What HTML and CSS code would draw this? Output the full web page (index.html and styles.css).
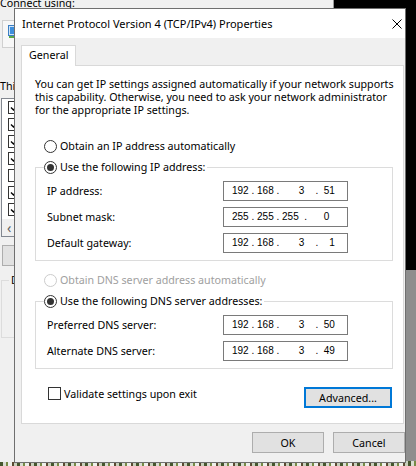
FILE: index.html
```html
<!DOCTYPE html>
<html lang="en">
<head>
    <meta charset="UTF-8">
    <meta name="viewport" content="width=device-width, initial-scale=1.0">
    <title>Internet Protocol Version 4 (TCP/IPv4) Properties</title>
    <link rel="stylesheet" href="styles.css">
</head>
<body>
    <div class="desktop">
        <div class="wallpaper"></div>

        <!-- adapter properties window, mostly covered by the dialog -->
        <section class="window back-window">
            <div class="back-text">Connect using:</div>
            <div class="adapter-box">
                <svg class="adapter-icon" width="12" height="14" viewBox="0 0 12 14">
                    <rect x="0.5" y="0.5" width="11" height="10" fill="#cfe3f7" stroke="#3b7fc4"/>
                    <rect x="2" y="2" width="8" height="7" fill="#3f8fdc"/>
                    <rect x="1" y="11" width="10" height="2" fill="#5aa84a"/>
                </svg>
            </div>
            <div class="back-text items-caption">This connection uses the following items:</div>
            <div class="item-list">
                <div class="item"><span class="mini-check checked"></span></div>
                <div class="item"><span class="mini-check checked"></span></div>
                <div class="item"><span class="mini-check checked"></span></div>
                <div class="item"><span class="mini-check checked"></span></div>
                <div class="item"><span class="mini-check"></span></div>
                <div class="item"><span class="mini-check checked"></span></div>
                <div class="item"><span class="mini-check checked"></span></div>
                <div class="hscroll"><span class="scroll-arrow">&lsaquo;</span></div>
            </div>
            <div class="back-button"></div>
            <fieldset class="back-group">
                <legend>Description</legend>
            </fieldset>
        </section>

        <section class="dialog">
            <header class="titlebar">
                <span class="title">Internet Protocol Version 4 (TCP/IPv4) Properties</span>
                <svg class="close" width="10" height="10" viewBox="0 0 10 10">
                    <path d="M0.5 0.5L9.5 9.5M9.5 0.5L0.5 9.5" stroke="#000" stroke-width="1"/>
                </svg>
            </header>

            <div class="dialog-body">
                <div class="tab">General</div>
                <div class="tab-panel">
                    <p class="intro">You can get IP settings assigned automatically if your network supports<br>this capability. Otherwise, you need to ask your network administrator<br>for the appropriate IP settings.</p>

                    <div class="option first-option"><span class="radio"></span>Obtain an IP address automatically</div>
                    <fieldset class="group">
                        <legend><span class="option-label"><span class="radio checked"></span>Use the following IP address:</span></legend>
                        <div class="field-row"><span>IP address:</span><span class="ip-box">192 . 168 .       3    .  51</span></div>
                        <div class="field-row"><span>Subnet mask:</span><span class="ip-box">255 . 255 . 255  .      0</span></div>
                        <div class="field-row"><span>Default gateway:</span><span class="ip-box">192 . 168 .       3    .    1</span></div>
                    </fieldset>

                    <div class="option disabled"><span class="radio"></span>Obtain DNS server address automatically</div>
                    <fieldset class="group">
                        <legend><span class="option-label"><span class="radio checked"></span>Use the following DNS server addresses:</span></legend>
                        <div class="field-row"><span>Preferred DNS server:</span><span class="ip-box">192 . 168 .       3    .  50</span></div>
                        <div class="field-row"><span>Alternate DNS server:</span><span class="ip-box">192 . 168 .       3    .  49</span></div>
                    </fieldset>

                    <div class="panel-footer">
                        <div class="check-option"><span class="checkbox"></span>Validate settings upon exit</div>
                        <button class="button advanced">Advanced...</button>
                    </div>
                </div>

                <div class="actions">
                    <button class="button">OK</button>
                    <button class="button">Cancel</button>
                </div>
            </div>
        </section>
    </div>
</body>
</html>
```

FILE: styles.css
```css
body {
    margin: 0;
    font-family: "Noto Sans", sans-serif;
    font-size: 10.7px;
    color: #000;
}
.desktop {
    position: relative;
    width: 416px;
    height: 466px;
    overflow: hidden;
    background: linear-gradient(#000 0 270px, #8e8e8e 270px);
}
.wallpaper {
    position: absolute;
    left: 0;
    right: 0;
    bottom: 0;
    height: 5px;
    background: repeating-linear-gradient(90deg, #46562e 0 3px, #d9ddd3 3px 6px, #788a46 6px 8px, #eef0ea 8px 12px, #5b4a32 12px 14px, #c8d0bc 14px 17px);
}

/* background window */
.back-window {
    position: absolute;
    left: -12px;
    top: -10px;
    width: 346px;
    height: 472px;
    box-sizing: border-box;
    padding: 7px 0 0 12px;
    background: #f0f0f0;
    border-right: 1px solid #9a9a9a;
}
.back-text {
    line-height: 13px;
    white-space: nowrap;
}
.adapter-box {
    margin: 10px 0 0 2px;
    height: 28px;
    width: 300px;
    box-sizing: border-box;
    border: 1px solid #d0d0d0;
    background: #f7f7f7;
    padding: 4px 0 0 5px;
}
.adapter-icon {
    display: block;
}
.items-caption {
    margin-top: 32px;
}
.item-list {
    margin: 5px 0 0 1px;
    width: 300px;
    height: 139px;
    box-sizing: border-box;
    border: 1px solid #828790;
    background: #fff;
    padding-left: 6px;
    display: flex;
    flex-direction: column;
}
.item {
    height: 17px;
    display: flex;
    align-items: center;
}
.mini-check {
    width: 13px;
    height: 13px;
    box-sizing: border-box;
    border: 1px solid #333;
    background: #fff;
    flex: none;
}
.mini-check.checked {
    background: #fff url("data:image/svg+xml,%3Csvg xmlns='http://www.w3.org/2000/svg' width='11' height='11'%3E%3Cpath d='M2 5.5l2.5 2.5 4.5-5' fill='none' stroke='%23000' stroke-width='1.4'/%3E%3C/svg%3E") no-repeat center;
}
.hscroll {
    margin: auto 0 0 -6px;
    height: 17px;
    background: #f0f0f0;
    display: flex;
    align-items: center;
    padding-left: 5px;
}
.scroll-arrow {
    color: #606060;
    font-size: 14px;
    line-height: 17px;
}
.back-button {
    margin: 8px 0 0 2px;
    width: 75px;
    height: 21px;
    box-sizing: border-box;
    border: 1px solid #adadad;
    background: #e1e1e1;
}
.back-group {
    margin: 8px 0 0 1px;
    width: 300px;
    height: 64px;
    box-sizing: border-box;
    padding: 0 0 0 7px;
    border: 1px solid #dcdcdc;
}
.back-group legend {
    padding: 0 2px;
    line-height: 13px;
}

/* dialog */
.dialog {
    position: absolute;
    left: 14px;
    top: 8px;
    width: 392px;
    height: 455px;
    box-sizing: border-box;
    border: 1px solid #6f6f6f;
    background: #f0f0f0;
    display: flex;
    flex-direction: column;
}
.titlebar {
    height: 29px;
    flex: none;
    background: #fff;
    display: flex;
    align-items: center;
    justify-content: space-between;
    padding: 0 3px 0 7px;
}
.title {
    font-size: 11px;
}
.close {
    display: block;
}
.dialog-body {
    flex: 1;
    padding: 7px 1px 0 6px;
    display: flex;
    flex-direction: column;
}
.tab {
    align-self: flex-start;
    position: relative;
    z-index: 1;
    height: 21px;
    box-sizing: border-box;
    margin-bottom: -1px;
    padding: 0 7px;
    line-height: 19px;
    background: #fff;
    border: 1px solid #d9d9d9;
    border-bottom: none;
}
.tab-panel {
    height: 359px;
    box-sizing: border-box;
    padding: 12px 10px 0 13px;
    background: #fff;
    border: 1px solid #d9d9d9;
}
.intro {
    margin: 0;
    line-height: 13px;
    white-space: nowrap;
}
.option,
.option-label {
    display: flex;
    align-items: center;
    gap: 3px;
}
.option {
    height: 22px;
    padding-left: 9px;
    margin-top: 8px;
}
.option.first-option {
    margin-top: 18px;
}
.option.disabled {
    color: #a0a0a0;
}
.option.disabled .radio {
    border-color: #cccccc;
}
.radio {
    width: 13px;
    height: 13px;
    box-sizing: border-box;
    border: 1px solid #333;
    border-radius: 50%;
    background: #fff;
    flex: none;
    display: flex;
    align-items: center;
    justify-content: center;
}
.radio.checked::after {
    content: "";
    width: 7px;
    height: 7px;
    border-radius: 50%;
    background: #333;
}
.group {
    margin: 0;
    min-width: 0;
    padding: 0 44px 7px 11px;
    border: 1px solid #dcdcdc;
}
.group legend {
    margin-left: -3px;
    padding: 0 2px 0 0;
}
.option-label {
    height: 20px;
}
.field-row {
    display: flex;
    justify-content: space-between;
    align-items: center;
    height: 20px;
    margin-top: 6px;
}
.group legend + .field-row {
    margin-top: 4px;
}
.ip-box {
    width: 125px;
    height: 20px;
    box-sizing: border-box;
    padding-left: 8px;
    border: 1px solid #7a7a7a;
    background: #fff;
    font-family: "Liberation Sans", Arial, sans-serif;
    font-size: 10px;
    line-height: 18px;
    white-space: pre;
}
.panel-footer {
    display: flex;
    justify-content: space-between;
    align-items: flex-start;
    margin-top: 18px;
}
.check-option {
    display: flex;
    align-items: center;
    gap: 3px;
    padding: 0 0 0 13px;
    height: 13px;
}
.checkbox {
    width: 13px;
    height: 13px;
    box-sizing: border-box;
    border: 1px solid #333;
    background: #fff;
}
.button {
    width: 72px;
    height: 21px;
    box-sizing: border-box;
    padding: 0;
    border: 1px solid #adadad;
    background: #e1e1e1;
    font: inherit;
    color: #000;
}
.button.advanced {
    width: 88px;
    margin-right: 1px;
    border: 2px solid #0078d7;
}
.actions {
    display: flex;
    justify-content: flex-end;
    gap: 9px;
    margin: 8px -1px 0 0;
}
```
